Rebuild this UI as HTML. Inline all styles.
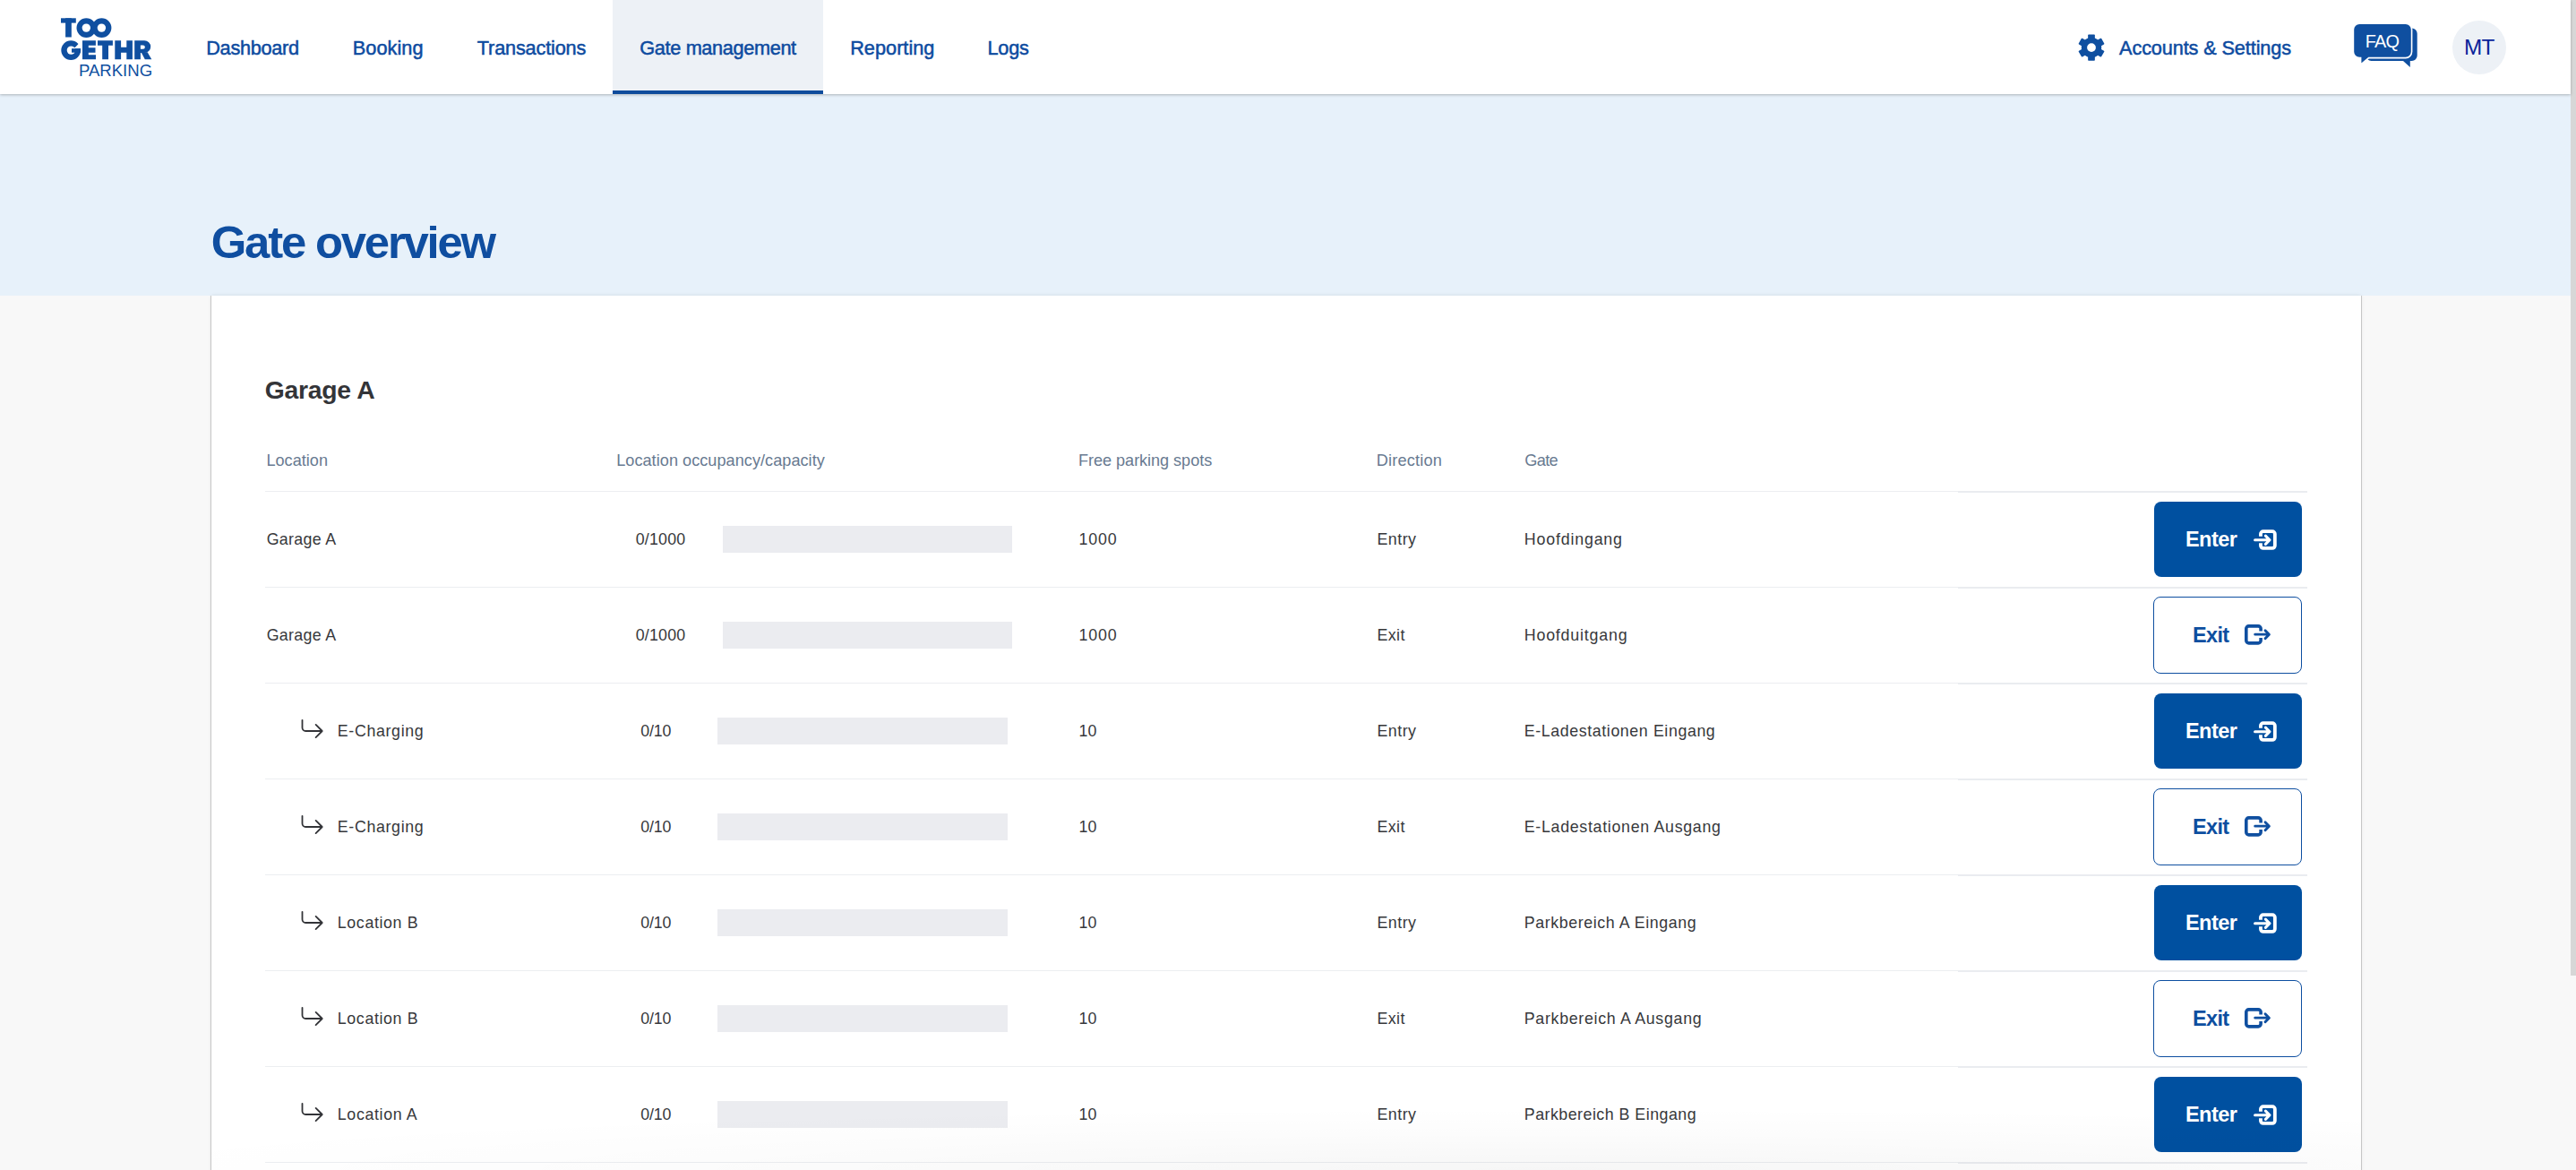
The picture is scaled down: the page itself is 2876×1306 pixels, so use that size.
<!DOCTYPE html>
<html><head><meta charset="utf-8"><style>
*{margin:0;padding:0;box-sizing:border-box}
html,body{width:2876px;height:1306px;overflow:hidden;background:#f8f8f8;font-family:"Liberation Sans",sans-serif}
div,svg{position:absolute}
.tx{white-space:nowrap}
.bar{width:323px;height:30px;background:#ebecf0}
.s1{left:296px;width:1890px;height:1px;background:#eceef1}
.s2{left:2186px;width:390px;height:2px;background:#eaecf0}
.btn{left:2405px;width:165px;height:84px;border-radius:8px;background:#0050a0}
.btno{left:2404px;width:166px;height:86px;border-radius:8px;background:#fff;border:1.6px solid #0d4ea0}
</style></head><body>
<div style="left:0;top:0;width:2870px;height:105px;background:#fff;box-shadow:0 1px 3px rgba(0,0,0,0.26);z-index:2"></div>
<div style="left:0;top:105px;width:2870px;height:225px;background:#e7f1fa"></div>
<div style="left:2870px;top:0;width:6px;height:1089px;background:#d7d7d7"></div>
<div style="left:236px;top:330px;width:2400px;height:980px;background:#fff;box-shadow:-1px 0 0 rgba(0,0,0,0.17),1px 0 0 rgba(0,0,0,0.17),0 0 4px rgba(0,0,0,0.10)"></div>
<div style="left:684px;top:0;width:235px;height:105px;background:#edf1f6;z-index:3"></div>
<div style="left:684px;top:101px;width:235px;height:4px;background:#0f4c9c;z-index:3"></div>
<div style="left:2738px;top:23px;width:60px;height:60px;border-radius:50%;background:#edf1f6;z-index:3"></div>
<div class="s1" style="top:548px"></div><div class="s2" style="top:548px"></div>
<div class="s1" style="top:655px"></div><div class="s2" style="top:655px"></div>
<div class="s1" style="top:762px"></div><div class="s2" style="top:762px"></div>
<div class="s1" style="top:869px"></div><div class="s2" style="top:869px"></div>
<div class="s1" style="top:976px"></div><div class="s2" style="top:976px"></div>
<div class="s1" style="top:1083px"></div><div class="s2" style="top:1083px"></div>
<div class="s1" style="top:1190px"></div><div class="s2" style="top:1190px"></div>
<div class="s1" style="top:1297px"></div><div class="s2" style="top:1297px"></div>
<div class="bar" style="left:807px;top:587px;width:323px"></div>
<div class="btn" style="top:560px"></div>
<div class="bar" style="left:807px;top:694px;width:323px"></div>
<div class="btno" style="top:666px"></div>
<div class="bar" style="left:801px;top:801px;width:324px"></div>
<div class="btn" style="top:774px"></div>
<div class="bar" style="left:801px;top:908px;width:324px"></div>
<div class="btno" style="top:880px"></div>
<div class="bar" style="left:801px;top:1015px;width:324px"></div>
<div class="btn" style="top:988px"></div>
<div class="bar" style="left:801px;top:1122px;width:324px"></div>
<div class="btno" style="top:1094px"></div>
<div class="bar" style="left:801px;top:1229px;width:324px"></div>
<div class="btn" style="top:1202px"></div>
<div class="tx" style="z-index:7;left:230.24px;top:42.76px;font-size:21.7px;line-height:21.7px;font-weight:400;letter-spacing:-0.29px;color:#0d4ba0;-webkit-text-stroke:0.5px #0d4ba0;">Dashboard</div>
<div class="tx" style="z-index:7;left:393.79px;top:42.76px;font-size:21.7px;line-height:21.7px;font-weight:400;letter-spacing:0.051px;color:#0d4ba0;-webkit-text-stroke:0.5px #0d4ba0;">Booking</div>
<div class="tx" style="z-index:7;left:532.84px;top:42.76px;font-size:21.7px;line-height:21.7px;font-weight:400;letter-spacing:-0.175px;color:#0d4ba0;-webkit-text-stroke:0.5px #0d4ba0;">Transactions</div>
<div class="tx" style="z-index:7;left:714.31px;top:42.76px;font-size:21.7px;line-height:21.7px;font-weight:400;letter-spacing:-0.343px;color:#0d4ba0;-webkit-text-stroke:0.5px #0d4ba0;">Gate management</div>
<div class="tx" style="z-index:7;left:949.19px;top:42.76px;font-size:21.7px;line-height:21.7px;font-weight:400;letter-spacing:0.023px;color:#0d4ba0;-webkit-text-stroke:0.5px #0d4ba0;">Reporting</div>
<div class="tx" style="z-index:7;left:1102.49px;top:42.76px;font-size:21.7px;line-height:21.7px;font-weight:400;letter-spacing:-0.235px;color:#0d4ba0;-webkit-text-stroke:0.5px #0d4ba0;">Logs</div>
<div class="tx" style="z-index:7;left:2366.05px;top:42.76px;font-size:21.7px;line-height:21.7px;font-weight:400;letter-spacing:-0.114px;color:#0d4ba0;-webkit-text-stroke:0.5px #0d4ba0;">Accounts &amp; Settings</div>
<div class="tx" style="z-index:7;left:2750.89px;top:41.1px;font-size:24.3px;line-height:24.3px;font-weight:400;letter-spacing:-0.506px;color:#0a249a;">MT</div>
<div class="tx" style="left:235.77px;top:246.3px;font-size:50.8px;line-height:50.8px;font-weight:700;letter-spacing:-2.179px;color:#0f4ea0;">Gate overview</div>
<div class="tx" style="left:295.86px;top:421.0px;font-size:28.3px;line-height:28.3px;font-weight:700;letter-spacing:-0.29px;color:#333438;">Garage A</div>
<div class="tx" style="left:297.39px;top:505.02px;font-size:18.1px;line-height:18.1px;font-weight:400;letter-spacing:0.033px;color:#687a91;">Location</div>
<div class="tx" style="left:688.19px;top:505.02px;font-size:18.1px;line-height:18.1px;font-weight:400;letter-spacing:0.049px;color:#687a91;">Location occupancy/capacity</div>
<div class="tx" style="left:1204.09px;top:505.02px;font-size:18.1px;line-height:18.1px;font-weight:400;letter-spacing:-0.044px;color:#687a91;">Free parking spots</div>
<div class="tx" style="left:1536.69px;top:505.02px;font-size:18.1px;line-height:18.1px;font-weight:400;letter-spacing:0.216px;color:#687a91;">Direction</div>
<div class="tx" style="left:1702.15px;top:505.02px;font-size:18.1px;line-height:18.1px;font-weight:400;letter-spacing:-0.576px;color:#687a91;">Gate</div>
<div class="tx" style="left:297.65px;top:593.94px;font-size:17.8px;line-height:17.8px;font-weight:400;letter-spacing:0.319px;color:#37383b;">Garage A</div>
<div class="tx" style="left:709.69px;top:593.94px;font-size:17.8px;line-height:17.8px;font-weight:400;letter-spacing:0.235px;color:#37383b;">0/1000</div>
<div class="tx" style="left:1204.49px;top:593.94px;font-size:17.8px;line-height:17.8px;font-weight:400;letter-spacing:0.856px;color:#37383b;">1000</div>
<div class="tx" style="left:1537.5px;top:593.94px;font-size:17.8px;line-height:17.8px;font-weight:400;letter-spacing:0.501px;color:#37383b;">Entry</div>
<div class="tx" style="left:1701.8px;top:593.94px;font-size:17.8px;line-height:17.8px;font-weight:400;letter-spacing:0.834px;color:#37383b;">Hoofdingang</div>
<div class="tx" style="left:2439.99px;top:591.2px;font-size:23.5px;line-height:23.5px;font-weight:700;letter-spacing:-0.567px;color:#ffffff;">Enter</div>
<div class="tx" style="left:297.65px;top:700.94px;font-size:17.8px;line-height:17.8px;font-weight:400;letter-spacing:0.319px;color:#37383b;">Garage A</div>
<div class="tx" style="left:709.69px;top:700.94px;font-size:17.8px;line-height:17.8px;font-weight:400;letter-spacing:0.235px;color:#37383b;">0/1000</div>
<div class="tx" style="left:1204.49px;top:700.94px;font-size:17.8px;line-height:17.8px;font-weight:400;letter-spacing:0.856px;color:#37383b;">1000</div>
<div class="tx" style="left:1537.5px;top:700.94px;font-size:17.8px;line-height:17.8px;font-weight:400;letter-spacing:0.42px;color:#37383b;">Exit</div>
<div class="tx" style="left:1701.8px;top:700.94px;font-size:17.8px;line-height:17.8px;font-weight:400;letter-spacing:0.813px;color:#37383b;">Hoofduitgang</div>
<div class="tx" style="left:2448.09px;top:698.2px;font-size:23.5px;line-height:23.5px;font-weight:700;letter-spacing:-0.722px;color:#0d4ea0;">Exit</div>
<div class="tx" style="left:376.8px;top:807.94px;font-size:17.8px;line-height:17.8px;font-weight:400;letter-spacing:0.66px;color:#37383b;">E-Charging</div>
<div class="tx" style="left:715.19px;top:807.94px;font-size:17.8px;line-height:17.8px;font-weight:400;letter-spacing:-0.176px;color:#37383b;">0/10</div>
<div class="tx" style="left:1204.49px;top:807.94px;font-size:17.8px;line-height:17.8px;font-weight:400;letter-spacing:0.114px;color:#37383b;">10</div>
<div class="tx" style="left:1537.5px;top:807.94px;font-size:17.8px;line-height:17.8px;font-weight:400;letter-spacing:0.501px;color:#37383b;">Entry</div>
<div class="tx" style="left:1701.8px;top:807.94px;font-size:17.8px;line-height:17.8px;font-weight:400;letter-spacing:0.603px;color:#37383b;">E-Ladestationen Eingang</div>
<div class="tx" style="left:2439.99px;top:805.2px;font-size:23.5px;line-height:23.5px;font-weight:700;letter-spacing:-0.567px;color:#ffffff;">Enter</div>
<div class="tx" style="left:376.8px;top:914.94px;font-size:17.8px;line-height:17.8px;font-weight:400;letter-spacing:0.66px;color:#37383b;">E-Charging</div>
<div class="tx" style="left:715.19px;top:914.94px;font-size:17.8px;line-height:17.8px;font-weight:400;letter-spacing:-0.176px;color:#37383b;">0/10</div>
<div class="tx" style="left:1204.49px;top:914.94px;font-size:17.8px;line-height:17.8px;font-weight:400;letter-spacing:0.114px;color:#37383b;">10</div>
<div class="tx" style="left:1537.5px;top:914.94px;font-size:17.8px;line-height:17.8px;font-weight:400;letter-spacing:0.42px;color:#37383b;">Exit</div>
<div class="tx" style="left:1701.8px;top:914.94px;font-size:17.8px;line-height:17.8px;font-weight:400;letter-spacing:0.703px;color:#37383b;">E-Ladestationen Ausgang</div>
<div class="tx" style="left:2448.09px;top:912.2px;font-size:23.5px;line-height:23.5px;font-weight:700;letter-spacing:-0.722px;color:#0d4ea0;">Exit</div>
<div class="tx" style="left:376.8px;top:1021.94px;font-size:17.8px;line-height:17.8px;font-weight:400;letter-spacing:0.638px;color:#37383b;">Location B</div>
<div class="tx" style="left:715.19px;top:1021.94px;font-size:17.8px;line-height:17.8px;font-weight:400;letter-spacing:-0.176px;color:#37383b;">0/10</div>
<div class="tx" style="left:1204.49px;top:1021.94px;font-size:17.8px;line-height:17.8px;font-weight:400;letter-spacing:0.114px;color:#37383b;">10</div>
<div class="tx" style="left:1537.5px;top:1021.94px;font-size:17.8px;line-height:17.8px;font-weight:400;letter-spacing:0.501px;color:#37383b;">Entry</div>
<div class="tx" style="left:1701.8px;top:1021.94px;font-size:17.8px;line-height:17.8px;font-weight:400;letter-spacing:0.597px;color:#37383b;">Parkbereich A Eingang</div>
<div class="tx" style="left:2439.99px;top:1019.2px;font-size:23.5px;line-height:23.5px;font-weight:700;letter-spacing:-0.567px;color:#ffffff;">Enter</div>
<div class="tx" style="left:376.8px;top:1128.94px;font-size:17.8px;line-height:17.8px;font-weight:400;letter-spacing:0.638px;color:#37383b;">Location B</div>
<div class="tx" style="left:715.19px;top:1128.94px;font-size:17.8px;line-height:17.8px;font-weight:400;letter-spacing:-0.176px;color:#37383b;">0/10</div>
<div class="tx" style="left:1204.49px;top:1128.94px;font-size:17.8px;line-height:17.8px;font-weight:400;letter-spacing:0.114px;color:#37383b;">10</div>
<div class="tx" style="left:1537.5px;top:1128.94px;font-size:17.8px;line-height:17.8px;font-weight:400;letter-spacing:0.42px;color:#37383b;">Exit</div>
<div class="tx" style="left:1701.8px;top:1128.94px;font-size:17.8px;line-height:17.8px;font-weight:400;letter-spacing:0.697px;color:#37383b;">Parkbereich A Ausgang</div>
<div class="tx" style="left:2448.09px;top:1126.2px;font-size:23.5px;line-height:23.5px;font-weight:700;letter-spacing:-0.722px;color:#0d4ea0;">Exit</div>
<div class="tx" style="left:376.8px;top:1235.94px;font-size:17.8px;line-height:17.8px;font-weight:400;letter-spacing:0.654px;color:#37383b;">Location A</div>
<div class="tx" style="left:715.19px;top:1235.94px;font-size:17.8px;line-height:17.8px;font-weight:400;letter-spacing:-0.176px;color:#37383b;">0/10</div>
<div class="tx" style="left:1204.49px;top:1235.94px;font-size:17.8px;line-height:17.8px;font-weight:400;letter-spacing:0.114px;color:#37383b;">10</div>
<div class="tx" style="left:1537.5px;top:1235.94px;font-size:17.8px;line-height:17.8px;font-weight:400;letter-spacing:0.501px;color:#37383b;">Entry</div>
<div class="tx" style="left:1701.8px;top:1235.94px;font-size:17.8px;line-height:17.8px;font-weight:400;letter-spacing:0.497px;color:#37383b;">Parkbereich B Eingang</div>
<div class="tx" style="left:2439.99px;top:1233.2px;font-size:23.5px;line-height:23.5px;font-weight:700;letter-spacing:-0.567px;color:#ffffff;">Enter</div>
<div class="tx" style="z-index:7;left:2640.64px;top:37.12px;font-size:19.9px;line-height:19.9px;font-weight:400;letter-spacing:-0.754px;color:#ffffff;">FAQ</div>
<div style="left:236px;top:1236px;width:2400px;height:70px;z-index:5;background:radial-gradient(ellipse 70% 100% at 62% 100%, rgba(0,0,0,0.035) 0%, rgba(0,0,0,0.012) 60%, rgba(0,0,0,0) 100%)"></div>
<svg style="left:0;top:0;z-index:6" width="2876" height="1306" viewBox="0 0 2876 1306"><rect x="68" y="20.3" width="16.8" height="5.3" fill="#0f4fa0"/><rect x="73.1" y="20.3" width="6.7" height="21.2" fill="#0f4fa0"/><circle cx="96.4" cy="31.1" r="10.9" fill="#0f4fa0"/><circle cx="113.5" cy="31.1" r="10.9" fill="#0f4fa0"/><circle cx="96.3" cy="31.1" r="4.7" fill="#fff"/><circle cx="113.4" cy="31.1" r="4.7" fill="#fff"/><circle cx="79.2" cy="56.1" r="10.9" fill="#0f4fa0"/><circle cx="79.4" cy="56.1" r="4.7" fill="#fff"/><polygon points="79.4,56 84.5,52.3 88.3,48.3 92,47 92,54.2 79.4,54.2" fill="#fff"/><rect x="80" y="54.2" width="10" height="4.5" fill="#0f4fa0"/><path d="M92 45.2H106.9V50.8H98.8V53.3H106.5V58.7H98.8V61.2H107V66.3H92Z" fill="#0f4fa0"/><path d="M109 45.2H125.9V50.8H121V66.3H114.2V50.8H109Z" fill="#0f4fa0"/><path d="M128.3 45.2H135.1V52.7H141.3V45.2H147.9V66.3H141.3V58.7H135.1V66.3H128.3Z" fill="#0f4fa0"/><path d="M150.2 45.2H161.2A7 7 0 0 1 168.2 52.2A7 7 0 0 1 161.2 59.1H156.9V66.3H150.2Z" fill="#0f4fa0"/><path d="M156.9 50.5H159.7A2.15 2.15 0 0 1 159.7 54.8H156.9Z" fill="#fff"/><polygon points="157.6,58.2 164.6,58.2 169.3,66.3 161.8,66.3" fill="#0f4fa0"/><text x="87.9" y="84.7" textLength="82.2" lengthAdjust="spacingAndGlyphs" font-family="Liberation Sans" font-size="19.2" fill="#0f4fa0">PARKING</text><g transform="translate(2335 53.1)" fill="#0f4fa0"><circle r="11.2"/><rect x="-3.85" y="-14.7" width="7.7" height="7" rx="0.8" transform="rotate(0)"/><rect x="-3.85" y="-14.7" width="7.7" height="7" rx="0.8" transform="rotate(60)"/><rect x="-3.85" y="-14.7" width="7.7" height="7" rx="0.8" transform="rotate(120)"/><rect x="-3.85" y="-14.7" width="7.7" height="7" rx="0.8" transform="rotate(180)"/><rect x="-3.85" y="-14.7" width="7.7" height="7" rx="0.8" transform="rotate(240)"/><rect x="-3.85" y="-14.7" width="7.7" height="7" rx="0.8" transform="rotate(300)"/><circle r="4.9" fill="#fff"/></g><path d="M2647.5 31.5H2692.7A6 6 0 0 1 2698.7 37.5V62A6 6 0 0 1 2692.7 68H2690.8V74.9L2683 68H2647.5A6 6 0 0 1 2641.5 62V37.5A6 6 0 0 1 2647.5 31.5Z" fill="#0f4fa0"/><path d="M2634.2 26.1H2685.8A6.8 6.8 0 0 1 2692.6 32.9V57.8A6.8 6.8 0 0 1 2685.8 64.6H2644.6L2635.6 72.2V64.6H2634.2A6.8 6.8 0 0 1 2627.4 57.8V32.9A6.8 6.8 0 0 1 2634.2 26.1Z" fill="#0f4fa0" stroke="#fff" stroke-width="1.6"/><path d="M2523.95 598.7V596A2.85 2.85 0 0 1 2526.8 593.15H2537A2.85 2.85 0 0 1 2539.85 596V609.1A2.85 2.85 0 0 1 2537 611.95H2526.8A2.85 2.85 0 0 1 2523.95 609.1V606.2" fill="none" stroke="#fff" stroke-width="3.8"/><path d="M2517.6 602.75H2532.5M2529.4 598.1L2534 602.75L2529.4 607.4" fill="none" stroke="#fff" stroke-width="3.1" stroke-linecap="round" stroke-linejoin="round"/><path d="M2524.1 704.6V701.8A2.9 2.9 0 0 0 2521.2 698.85H2510.7A2.9 2.9 0 0 0 2507.8 701.8V715A2.9 2.9 0 0 0 2510.7 717.85H2521.2A2.9 2.9 0 0 0 2524.1 715V712.1" fill="none" stroke="#0f4fa0" stroke-width="3.6"/><path d="M2517.7 708.15H2532.3M2529 703.8L2533.4 708.2L2529 712.8" fill="none" stroke="#0f4fa0" stroke-width="2.9" stroke-linecap="round" stroke-linejoin="round"/><path d="M337.5 803.8V812.3A3.7 3.7 0 0 0 341.2 816H359.2M352.6 808.9L359.7 816L352.6 823.0999999999999" fill="none" stroke="#333438" stroke-width="1.8" stroke-linecap="round" stroke-linejoin="round"/><path d="M2523.95 812.7V810A2.85 2.85 0 0 1 2526.8 807.15H2537A2.85 2.85 0 0 1 2539.85 810V823.1A2.85 2.85 0 0 1 2537 825.95H2526.8A2.85 2.85 0 0 1 2523.95 823.1V820.2" fill="none" stroke="#fff" stroke-width="3.8"/><path d="M2517.6 816.75H2532.5M2529.4 812.1L2534 816.75L2529.4 821.4" fill="none" stroke="#fff" stroke-width="3.1" stroke-linecap="round" stroke-linejoin="round"/><path d="M337.5 910.8V919.3A3.7 3.7 0 0 0 341.2 923H359.2M352.6 915.9000000000001L359.7 923L352.6 930.0999999999999" fill="none" stroke="#333438" stroke-width="1.8" stroke-linecap="round" stroke-linejoin="round"/><path d="M2524.1 918.6V915.8A2.9 2.9 0 0 0 2521.2 912.85H2510.7A2.9 2.9 0 0 0 2507.8 915.8V929A2.9 2.9 0 0 0 2510.7 931.85H2521.2A2.9 2.9 0 0 0 2524.1 929V926.1" fill="none" stroke="#0f4fa0" stroke-width="3.6"/><path d="M2517.7 922.15H2532.3M2529 917.8L2533.4 922.2L2529 926.8" fill="none" stroke="#0f4fa0" stroke-width="2.9" stroke-linecap="round" stroke-linejoin="round"/><path d="M337.5 1017.8V1026.3A3.7 3.7 0 0 0 341.2 1030H359.2M352.6 1022.9000000000001L359.7 1030L352.6 1037.1" fill="none" stroke="#333438" stroke-width="1.8" stroke-linecap="round" stroke-linejoin="round"/><path d="M2523.95 1026.7V1024A2.85 2.85 0 0 1 2526.8 1021.15H2537A2.85 2.85 0 0 1 2539.85 1024V1037.1A2.85 2.85 0 0 1 2537 1039.95H2526.8A2.85 2.85 0 0 1 2523.95 1037.1V1034.2" fill="none" stroke="#fff" stroke-width="3.8"/><path d="M2517.6 1030.75H2532.5M2529.4 1026.1L2534 1030.75L2529.4 1035.4" fill="none" stroke="#fff" stroke-width="3.1" stroke-linecap="round" stroke-linejoin="round"/><path d="M337.5 1124.8V1133.3A3.7 3.7 0 0 0 341.2 1137H359.2M352.6 1129.9L359.7 1137L352.6 1144.1" fill="none" stroke="#333438" stroke-width="1.8" stroke-linecap="round" stroke-linejoin="round"/><path d="M2524.1 1132.6V1129.8A2.9 2.9 0 0 0 2521.2 1126.85H2510.7A2.9 2.9 0 0 0 2507.8 1129.8V1143A2.9 2.9 0 0 0 2510.7 1145.85H2521.2A2.9 2.9 0 0 0 2524.1 1143V1140.1" fill="none" stroke="#0f4fa0" stroke-width="3.6"/><path d="M2517.7 1136.15H2532.3M2529 1131.8L2533.4 1136.2L2529 1140.8" fill="none" stroke="#0f4fa0" stroke-width="2.9" stroke-linecap="round" stroke-linejoin="round"/><path d="M337.5 1231.8V1240.3A3.7 3.7 0 0 0 341.2 1244H359.2M352.6 1236.9L359.7 1244L352.6 1251.1" fill="none" stroke="#333438" stroke-width="1.8" stroke-linecap="round" stroke-linejoin="round"/><path d="M2523.95 1240.7V1238A2.85 2.85 0 0 1 2526.8 1235.15H2537A2.85 2.85 0 0 1 2539.85 1238V1251.1A2.85 2.85 0 0 1 2537 1253.95H2526.8A2.85 2.85 0 0 1 2523.95 1251.1V1248.2" fill="none" stroke="#fff" stroke-width="3.8"/><path d="M2517.6 1244.75H2532.5M2529.4 1240.1L2534 1244.75L2529.4 1249.4" fill="none" stroke="#fff" stroke-width="3.1" stroke-linecap="round" stroke-linejoin="round"/></svg>
</body></html>
